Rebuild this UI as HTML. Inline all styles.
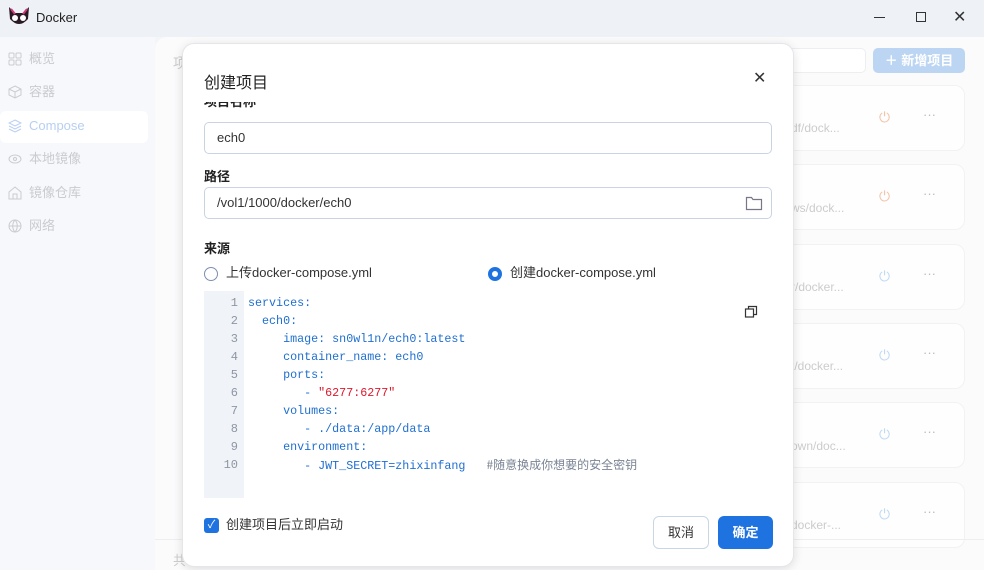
<!DOCTYPE html>
<html><head><meta charset="utf-8"><style>
*{box-sizing:border-box;margin:0;padding:0}
body{width:984px;height:570px;overflow:hidden;position:relative;background:#f3f5f9;font-family:"Liberation Sans","Noto Sans CJK SC",sans-serif;font-size:13px;color:#333}
.tb{position:absolute;left:0;top:0;width:984px;height:37px;background:#eef1f6}
.side{position:absolute;left:0;top:37px;width:155px;height:533px;background:#f7f8fb}
.nav{position:absolute;left:8px;height:22px;line-height:22px;font-size:13px;color:#c9cbd0}
.nav svg{position:absolute;left:0;top:4px}
.nav span{position:absolute;left:21px;white-space:nowrap}
.main{position:absolute;left:155px;top:37px;width:829px;height:533px;background:#fbfbfc;border-radius:12px 0 0 0}
.card{position:absolute;left:600px;width:210px;height:66px;border:1px solid #f1f2f4;border-radius:10px;background:#fefefe}
.modal{position:absolute;left:182px;top:43px;width:612px;height:524px;background:#fff;border-radius:12px;box-shadow:0 2px 10px rgba(0,0,0,.12);border:1px solid #e4e6ea}
.inp{position:absolute;left:21px;width:568px;height:32px;border:1px solid #c9d3e2;border-radius:5px;padding-left:12px;line-height:30px;font-size:13px;color:#333}
.lbl{position:absolute;left:21px;font-size:13px;font-weight:bold;color:#222}
.code{position:absolute;left:21px;top:247px;width:568px;height:207px;background:#fff}
.gut{position:absolute;left:0;top:0;width:40px;height:207px;background:#f0f3f8}
.ln{position:absolute;left:0;width:34px;height:18px;line-height:18px;text-align:right;font-family:"Liberation Mono",monospace;font-size:12px;color:#8d96a3}
.cl{position:absolute;left:44px;height:18px;line-height:18px;font-family:"Liberation Mono",monospace;font-size:11.7px;color:#1f6fd0;white-space:pre}
</style></head><body>
<div class="tb">
<svg style="position:absolute;left:7px;top:5px" width="24" height="24" viewBox="0 0 24 24"><path d="M2 2 L8 8 L16 8 L22 2 L21 14 Q12 24 3 14Z" fill="#2a1a24"/><circle cx="8" cy="13" r="3" fill="#fff"/><circle cx="16" cy="13" r="3" fill="#fff"/><path d="M4 4 L8 9 M20 4 L16 9" stroke="#d03a7a" stroke-width="2"/></svg>
<div style="position:absolute;left:36px;top:10px;font-size:13px;color:#222">Docker</div>
<div style="position:absolute;left:874px;top:17px;width:11px;height:1px;background:#333"></div>
<div style="position:absolute;left:916px;top:12px;width:10px;height:10px;border:1.3px solid #333"></div>
<div style="position:absolute;left:953px;top:7px;font-size:16px;color:#333">✕</div>
</div>
<div class="side">
<div class="nav" style="top:11px"><svg width="14" height="14" viewBox="0 0 14 14" fill="none" stroke="#c9cbd0"><rect x="1" y="1" width="5" height="5" rx="1"/><rect x="8" y="1" width="5" height="5" rx="1"/><rect x="1" y="8" width="5" height="5" rx="1"/><rect x="8" y="8" width="5" height="5" rx="1"/></svg><span>概览</span></div>
<div class="nav" style="top:44px"><svg width="14" height="14" viewBox="0 0 14 14" fill="none" stroke="#c9cbd0"><path d="M7 1l6 3v6l-6 3-6-3V4zM1 4l6 3 6-3M7 7v6"/></svg><span>容器</span></div>
<div style="position:absolute;left:0;top:74px;width:148px;height:32px;background:#fff;border-radius:6px"></div>
<div class="nav" style="top:78px;color:#b7cff2"><svg width="14" height="14" viewBox="0 0 14 14" fill="none" stroke="#b7cff2"><path d="M7 1l6 3-6 3-6-3zM1 7l6 3 6-3M1 10l6 3 6-3"/></svg><span>Compose</span></div>
<div class="nav" style="top:111px"><svg width="14" height="14" viewBox="0 0 14 14" fill="none" stroke="#c9cbd0"><ellipse cx="7" cy="7" rx="6" ry="4"/><circle cx="7" cy="7" r="1.5"/></svg><span>本地镜像</span></div>
<div class="nav" style="top:145px"><svg width="14" height="14" viewBox="0 0 14 14" fill="none" stroke="#c9cbd0"><path d="M1 6l6-5 6 5v7H1zM5 13V8h4v5"/></svg><span>镜像仓库</span></div>
<div class="nav" style="top:178px"><svg width="14" height="14" viewBox="0 0 14 14" fill="none" stroke="#c9cbd0"><circle cx="7" cy="7" r="6"/><path d="M1 7h12M7 1c-3 3-3 9 0 12M7 1c3 3 3 9 0 12"/></svg><span>网络</span></div>
</div>
<div class="main">
<div style="position:absolute;left:18px;top:16px;color:#ccc;font-size:14px">项</div>
<div style="position:absolute;left:620px;top:11px;width:91px;height:25px;border:1px solid #eceef1;border-radius:5px;background:#fff"></div>
<div style="position:absolute;left:718px;top:11px;width:92px;height:25px;border-radius:5px;background:#bcd5f3;color:#fff;font-weight:bold;font-size:13px;line-height:25px;text-align:center">＋ 新增项目</div>
<div class="card" style="top:48px"></div><div class="card" style="top:127px"></div><div class="card" style="top:207px"></div><div class="card" style="top:286px"></div><div class="card" style="top:365px"></div><div class="card" style="top:445px"></div>
<div style="position:absolute;left:636px;top:84px;color:#ccc;font-size:12px">df/dock...</div>
<div style="position:absolute;left:636px;top:164px;color:#ccc;font-size:12px">ws/dock...</div>
<div style="position:absolute;left:636px;top:243px;color:#ccc;font-size:12px">r/docker...</div>
<div style="position:absolute;left:636px;top:322px;color:#ccc;font-size:12px">t/docker...</div>
<div style="position:absolute;left:636px;top:402px;color:#ccc;font-size:12px">own/doc...</div>
<div style="position:absolute;left:636px;top:481px;color:#ccc;font-size:12px">docker-...</div>
<div style="position:absolute;left:724px;top:72px;color:#f2c3a6;font-size:14px">⏻</div>
<div style="position:absolute;left:724px;top:151px;color:#f2c3a6;font-size:14px">⏻</div>
<div style="position:absolute;left:724px;top:231px;color:#bfd8f3;font-size:14px">⏻</div>
<div style="position:absolute;left:724px;top:310px;color:#bfd8f3;font-size:14px">⏻</div>
<div style="position:absolute;left:724px;top:389px;color:#bfd8f3;font-size:14px">⏻</div>
<div style="position:absolute;left:724px;top:469px;color:#bfd8f3;font-size:14px">⏻</div>
<div style="position:absolute;left:768px;top:70px;color:#bbb">···</div>
<div style="position:absolute;left:768px;top:149px;color:#bbb">···</div>
<div style="position:absolute;left:768px;top:229px;color:#bbb">···</div>
<div style="position:absolute;left:768px;top:308px;color:#bbb">···</div>
<div style="position:absolute;left:768px;top:387px;color:#bbb">···</div>
<div style="position:absolute;left:768px;top:467px;color:#bbb">···</div>
<div style="position:absolute;left:0;top:502px;width:829px;height:1px;background:#eceef1"></div>
<div style="position:absolute;left:18px;top:513px;color:#ccc">共</div>
</div>
<div class="modal">
<div style="position:absolute;left:21px;top:25px;font-size:16px;color:#222">创建项目</div>
<div style="position:absolute;left:570px;top:24px;font-size:16px;color:#333">✕</div>
<div class="lbl" style="top:58px;height:8px;overflow:hidden;line-height:0">项目名称</div>
<div class="inp" style="top:78px">ech0</div>
<div class="lbl" style="top:122px">路径</div>
<div class="inp" style="top:143px">/vol1/1000/docker/ech0
<svg style="position:absolute;right:8px;top:7px" width="18" height="16" viewBox="0 0 18 16"><path d="M1.5 2.5h5l1.5 2h8.5v10h-15z" fill="none" stroke="#778" stroke-width="1.2"/></svg></div>
<div class="lbl" style="top:194px">来源</div>
<div style="position:absolute;left:21px;top:223px;width:14px;height:14px;border:1px solid #7b8fb0;border-radius:50%"></div>
<div style="position:absolute;left:43px;top:221px;color:#333;line-height:16px">上传docker-compose.yml</div>
<div style="position:absolute;left:305px;top:223px;width:14px;height:14px;border:4px solid #1f73e0;border-radius:50%"></div>
<div style="position:absolute;left:327px;top:221px;color:#333;line-height:16px">创建docker-compose.yml</div>
<div class="code"><div class="gut"></div>
<div class="ln" style="top:3px">1</div><div class="ln" style="top:21px">2</div><div class="ln" style="top:39px">3</div><div class="ln" style="top:57px">4</div><div class="ln" style="top:75px">5</div><div class="ln" style="top:93px">6</div><div class="ln" style="top:111px">7</div><div class="ln" style="top:129px">8</div><div class="ln" style="top:147px">9</div><div class="ln" style="top:165px">10</div>
<div class="cl" style="top:3px">services:</div>
<div class="cl" style="top:21px">  ech0:</div>
<div class="cl" style="top:39px">     image: sn0wl1n/ech0:latest</div>
<div class="cl" style="top:57px">     container_name: ech0</div>
<div class="cl" style="top:75px">     ports:</div>
<div class="cl" style="top:93px">        - <span style="color:#e0182b">"6277:6277"</span></div>
<div class="cl" style="top:111px">     volumes:</div>
<div class="cl" style="top:129px">        - ./data:/app/data</div>
<div class="cl" style="top:147px">     environment:</div>
<div class="cl" style="top:165px">        - JWT_SECRET=zhixinfang   <span style="color:#7a8494;font-family:'Noto Sans CJK SC',sans-serif;font-size:12px">#随意换成你想要的安全密钥</span></div>
<svg style="position:absolute;left:540px;top:14px" width="14" height="14" viewBox="0 0 14 14"><rect x="1.5" y="4" width="8" height="8" fill="none" stroke="#333" stroke-width="1.2"/><path d="M4.5 4V1.5h8v8H9.5" fill="none" stroke="#333" stroke-width="1.2"/></svg>
</div>
<div style="position:absolute;left:21px;top:474px;width:15px;height:15px;background:#1f73e0;border-radius:3px;color:#fff;font-size:11px;line-height:15px;text-align:center">✓</div>
<div style="position:absolute;left:43px;top:473px;color:#333;line-height:16px">创建项目后立即启动</div>
<div style="position:absolute;left:470px;top:472px;width:56px;height:33px;border:1px solid #c9d6e6;border-radius:6px;text-align:center;line-height:31px;color:#333;font-size:13px">取消</div>
<div style="position:absolute;left:535px;top:472px;width:55px;height:33px;background:#1f73e0;border-radius:6px;text-align:center;line-height:33px;color:#fff;font-weight:bold;font-size:13px">确定</div>
</div>
</body></html>
